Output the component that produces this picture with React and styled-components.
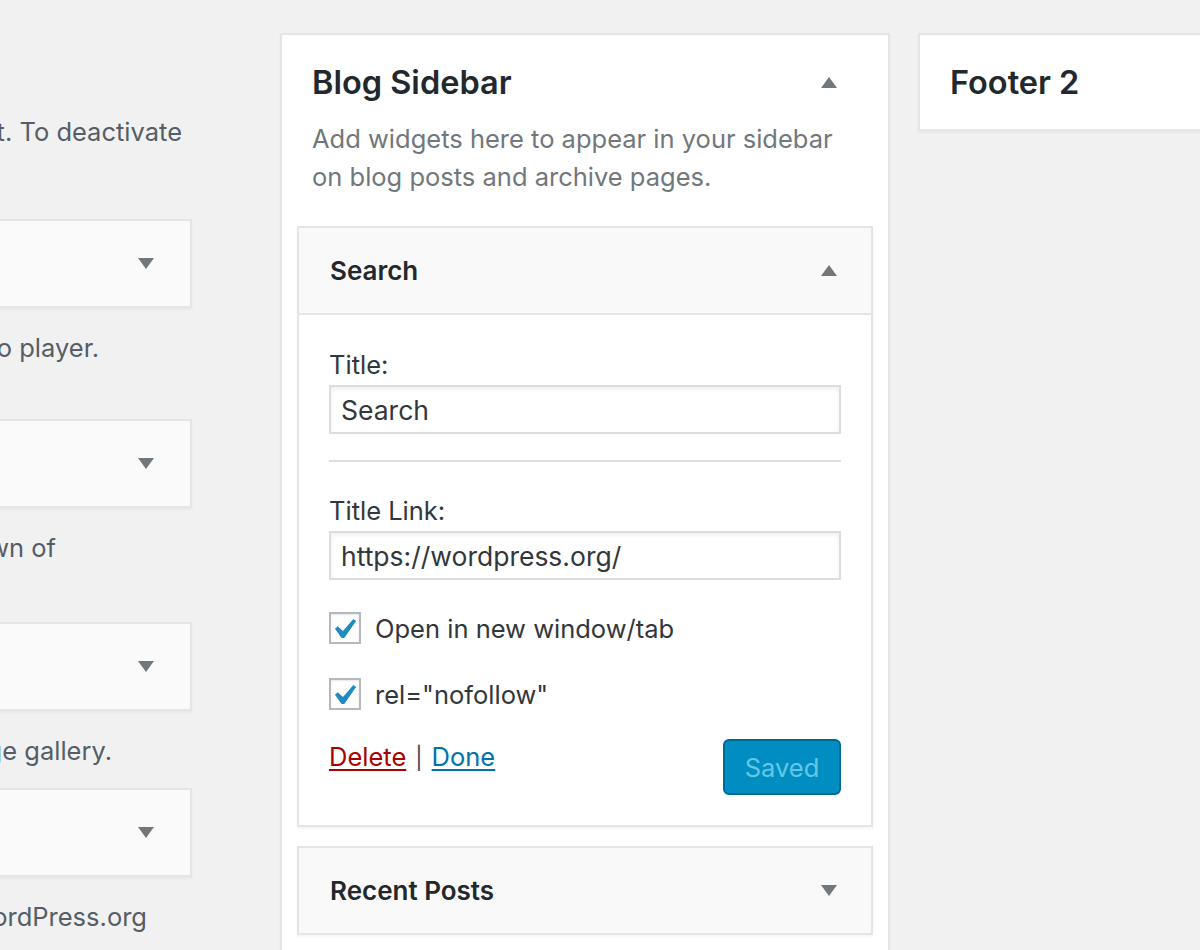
import React from 'react';
import styled, { createGlobalStyle } from 'styled-components';

const GlobalStyle = createGlobalStyle`
  html, body {
    margin: 0;
    padding: 0;
    background: #f1f1f1;
  }
  body {
    font-family: Inter, "Noto Sans", "Liberation Sans", sans-serif;
    color: #32373c;
  }
`;

const Page = styled.div`
  display: flex;
  align-items: flex-start;
  width: 1200px;
  height: 950px;
  overflow: hidden;
`;

/* ---- available widgets column (mostly off screen on the left) ---- */

const AvailableCol = styled.div`
  flex-shrink: 0;
  width: 400px;
  margin-left: -208px;
  padding-top: 112px;
`;

const Desc = styled.div`
  display: flex;
  flex-direction: column;
  align-items: flex-end;
  white-space: nowrap;
  font-size: 25.5px;
  line-height: 39px;
  color: #555d66;
  min-height: ${p => p.$lines * 39}px;
  padding-top: ${p => (p.$intro ? 0 : 20)}px;
  padding-right: ${p => p.$end}px;
  margin-bottom: ${p => p.$after}px;
`;

const DescLine = styled.span`
  display: block;
  visibility: ${p => (p.$hidden ? 'hidden' : 'visible')};
`;

const AvailableWidget = styled.div`
  box-sizing: border-box;
  height: 89px;
  display: flex;
  align-items: center;
  justify-content: space-between;
  padding: 0 36px 0 30px;
  background: #fafafa;
  border: 2px solid #e5e5e5;
  box-shadow: 0 2px 2px rgba(0, 0, 0, 0.04);
`;

const Arrow = styled.span`
  display: block;
  width: 0;
  height: 0;
  border-left: 8px solid transparent;
  border-right: 8px solid transparent;
  ${p => (p.$up ? 'border-bottom' : 'border-top')}: 11px solid #72777c;
`;

/* ---- sidebars ---- */

const SidebarPanel = styled.div`
  flex-shrink: 0;
  box-sizing: border-box;
  width: ${p => p.$width}px;
  margin-left: ${p => p.$gap}px;
  margin-top: 33px;
  padding: 0 15px ${p => (p.$open ? 60 : 0)}px;
  background: #fff;
  border: 2px solid #e5e5e5;
  box-shadow: 0 2px 2px rgba(0, 0, 0, 0.04);
`;

const SidebarHeader = styled.div`
  display: flex;
  align-items: center;
  justify-content: space-between;
  padding: 25px 36px ${p => (p.$open ? 0 : 24)}px 15px;
`;

const SidebarTitle = styled.h2`
  margin: 0;
  font-size: 32.5px;
  line-height: 45px;
  font-weight: 600;
  color: #23282d;
`;

const SidebarDesc = styled.p`
  margin: 15px 0 30px;
  padding: 0 15px;
  font-size: 25.5px;
  line-height: 38px;
  color: #72777c;
`;

const Widget = styled.div`
  background: #fff;
  border: 2px solid #e5e5e5;
  box-shadow: 0 2px 2px rgba(0, 0, 0, 0.04);
  & + & {
    margin-top: 19px;
  }
`;

const WidgetTop = styled.div`
  height: 85px;
  display: flex;
  align-items: center;
  justify-content: space-between;
  padding: 0 34px 0 31px;
  background: #f9f9f9;
  border-bottom: ${p => (p.$open ? '2px solid #e5e5e5' : 'none')};
`;

const WidgetTitle = styled.h3`
  margin: 0;
  font-size: 26px;
  font-weight: 600;
  color: #23282d;
`;

const WidgetInside = styled.div`
  padding: 32px 30px 30px;
`;

const Label = styled.label`
  display: block;
  font-size: 25.5px;
  line-height: 36px;
  margin-bottom: 2px;
  color: #32373c;
`;

const TextInput = styled.input`
  display: block;
  box-sizing: border-box;
  width: 100%;
  height: 49px;
  margin: 0;
  padding: 0 10px;
  font-family: inherit;
  font-size: 26.5px;
  color: #32373c;
  background: #fff;
  border: 2px solid #ddd;
  box-shadow: inset 0 2px 4px rgba(0, 0, 0, 0.07);
  outline: none;
`;

const Separator = styled.hr`
  margin: 26px 0 31px;
  border: 0;
  border-top: 2px solid #ddd;
  height: 0;
`;

const CheckRow = styled.div`
  display: flex;
  align-items: center;
  gap: 14px;
  margin-top: ${p => p.$top}px;
  font-size: 25.5px;
  color: #32373c;
`;

const CheckBox = styled.span`
  box-sizing: border-box;
  width: 32px;
  height: 32px;
  display: flex;
  align-items: center;
  justify-content: center;
  background: #fff;
  border: 2px solid #b4b9be;
  box-shadow: inset 0 1px 2px rgba(0, 0, 0, 0.1);
`;

const Actions = styled.div`
  display: flex;
  align-items: flex-start;
  justify-content: space-between;
  margin-top: 29px;
`;

const LinkRow = styled.div`
  font-size: 25.5px;
  line-height: 36px;
  color: #444;
`;

const Divider = styled.span`
  display: inline-block;
  margin: 0 9px;
  font-size: 22px;
`;

const ActionLink = styled.a`
  color: ${p => (p.$danger ? '#a00' : '#0073aa')};
  text-decoration: underline;
  text-underline-offset: 3px;
  cursor: pointer;
`;

const SaveButton = styled.button`
  box-sizing: border-box;
  width: 118px;
  height: 56px;
  padding: 0;
  font-family: inherit;
  font-size: 25.5px;
  color: #66c6e4;
  background: #008ec2;
  border: 2px solid #006799;
  border-radius: 6px;
`;

const Check = () => (
  <svg width="23" height="21" viewBox="5.3 4.4 11.3 10.3">
    <path d="M14.83 4.89l1.34.94-5.81 8.38H9.02L5.78 9.67l1.34-1.25 2.57 2.4z" fill="#1e8cbe" />
  </svg>
);

const available = [
  { name: 'Audio', text: 'Displays an audio player.', rows: 2, end: 93, after: 13 },
  { name: 'Categories', text: 'A list or dropdown of', more: 'categories.', rows: 2, end: 136, after: 16 },
  { name: 'Gallery', text: 'Displays an image gallery.', rows: 1, end: 80, after: 18 },
  { name: 'Meta', text: 'Login, RSS, & WordPress.org', more: 'links.', rows: 2, end: 45, after: 16 },
];

export default function App() {
  return (
    <>
      <GlobalStyle />
      <Page>
        <AvailableCol>
          <Desc $intro $lines={2} $end={10} $after={29}>
            <DescLine>To activate a widget drag it to a sidebar or click on it. To deactivate</DescLine>
            <DescLine $hidden>a widget and delete its settings, drag it back.</DescLine>
          </Desc>
          {available.map(w => (
            <React.Fragment key={w.name}>
              <AvailableWidget>
                <WidgetTitle>{w.name}</WidgetTitle>
                <Arrow />
              </AvailableWidget>
              <Desc $lines={w.rows} $end={w.end} $after={w.after}>
                <DescLine>{w.text}</DescLine>
                {w.more && <DescLine $hidden>{w.more}</DescLine>}
              </Desc>
            </React.Fragment>
          ))}
        </AvailableCol>

        <SidebarPanel $open $width={610} $gap={88}>
          <SidebarHeader $open>
            <SidebarTitle>Blog Sidebar</SidebarTitle>
            <Arrow $up />
          </SidebarHeader>
          <SidebarDesc>
            Add widgets here to appear in your sidebar<br />
            on blog posts and archive pages.
          </SidebarDesc>

          <Widget>
            <WidgetTop $open>
              <WidgetTitle>Search</WidgetTitle>
              <Arrow $up />
            </WidgetTop>
            <WidgetInside>
              <Label>Title:</Label>
              <TextInput defaultValue="Search" />
              <Separator />
              <Label>Title Link:</Label>
              <TextInput defaultValue="https://wordpress.org/" />
              <CheckRow $top={32}>
                <CheckBox><Check /></CheckBox>
                Open in new window/tab
              </CheckRow>
              <CheckRow $top={34}>
                <CheckBox><Check /></CheckBox>
                rel="nofollow"
              </CheckRow>
              <Actions>
                <LinkRow>
                  <ActionLink $danger>Delete</ActionLink><Divider>|</Divider><ActionLink>Done</ActionLink>
                </LinkRow>
                <SaveButton disabled>Saved</SaveButton>
              </Actions>
            </WidgetInside>
          </Widget>

          <Widget>
            <WidgetTop>
              <WidgetTitle>Recent Posts</WidgetTitle>
              <Arrow />
            </WidgetTop>
          </Widget>
        </SidebarPanel>

        <SidebarPanel $width={610} $gap={28}>
          <SidebarHeader>
            <SidebarTitle>Footer 2</SidebarTitle>
            <Arrow $up />
          </SidebarHeader>
        </SidebarPanel>
      </Page>
    </>
  );
}
